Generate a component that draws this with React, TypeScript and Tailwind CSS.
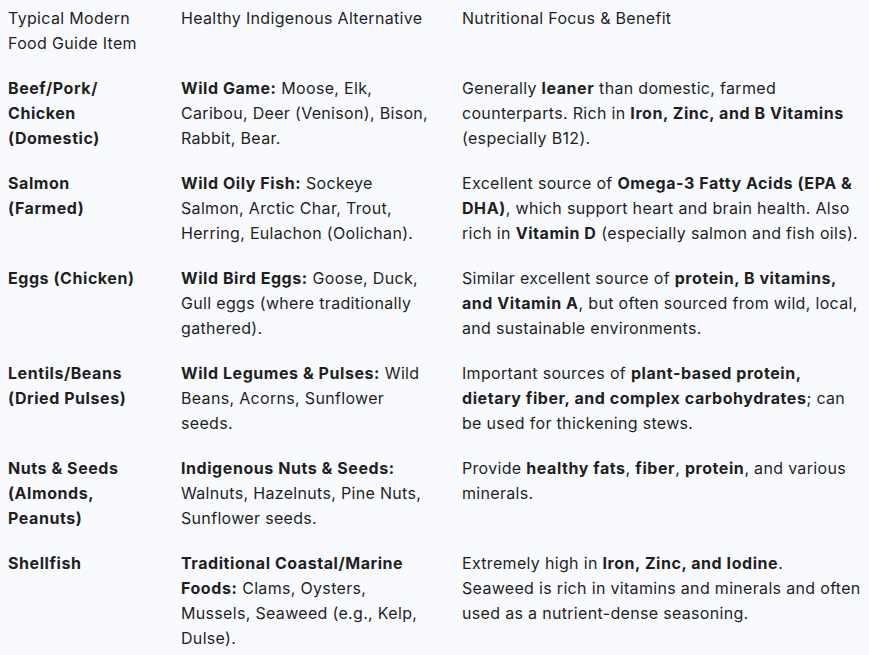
type Row = { item: React.ReactNode; alt: React.ReactNode; focus: React.ReactNode }

// line breaks follow the source layout so the columns wrap the same way
const rows: Row[] = [
  {
    item: (
      <>
        Beef/Pork/
        <br />
        Chicken
        <br />
        (Domestic)
      </>
    ),
    alt: (
      <>
        <b>Wild Game:</b> Moose, Elk,
        <br />
        Caribou, Deer (Venison), Bison,
        <br />
        Rabbit, Bear.
      </>
    ),
    focus: (
      <>
        Generally <b>leaner</b> than domestic, farmed
        <br />
        counterparts. Rich in <b>Iron, Zinc, and B Vitamins</b>
        <br />
        (especially B12).
      </>
    ),
  },
  {
    item: (
      <>
        Salmon
        <br />
        (Farmed)
      </>
    ),
    alt: (
      <>
        <b>Wild Oily Fish:</b> Sockeye
        <br />
        Salmon, Arctic Char, Trout,
        <br />
        Herring, Eulachon (Oolichan).
      </>
    ),
    focus: (
      <>
        Excellent source of{" "}
        <b>
          Omega-3 Fatty Acids (EPA &amp;
          <br />
          DHA)
        </b>
        , which support heart and brain health. Also
        <br />
        rich in <b>Vitamin D</b> (especially salmon and fish oils).
      </>
    ),
  },
  {
    item: "Eggs (Chicken)",
    alt: (
      <>
        <b>Wild Bird Eggs:</b> Goose, Duck,
        <br />
        Gull eggs (where traditionally
        <br />
        gathered).
      </>
    ),
    focus: (
      <>
        Similar excellent source of{" "}
        <b>
          protein, B vitamins,
          <br />
          and Vitamin A
        </b>
        , but often sourced from wild, local,
        <br />
        and sustainable environments.
      </>
    ),
  },
  {
    item: (
      <>
        Lentils/Beans
        <br />
        (Dried Pulses)
      </>
    ),
    alt: (
      <>
        <b>Wild Legumes &amp; Pulses:</b> Wild
        <br />
        Beans, Acorns, Sunflower
        <br />
        seeds.
      </>
    ),
    focus: (
      <>
        Important sources of{" "}
        <b>
          plant-based protein,
          <br />
          dietary fiber, and complex carbohydrates
        </b>
        ; can
        <br />
        be used for thickening stews.
      </>
    ),
  },
  {
    item: (
      <>
        Nuts &amp; Seeds
        <br />
        (Almonds,
        <br />
        Peanuts)
      </>
    ),
    alt: (
      <>
        <b>Indigenous Nuts &amp; Seeds:</b>
        <br />
        Walnuts, Hazelnuts, Pine Nuts,
        <br />
        Sunflower seeds.
      </>
    ),
    focus: (
      <>
        Provide <b>healthy fats</b>, <b>fiber</b>, <b>protein</b>, and various
        <br />
        minerals.
      </>
    ),
  },
  {
    item: "Shellfish",
    alt: (
      <>
        <b>
          Traditional Coastal/Marine
          <br />
          Foods:
        </b>{" "}
        Clams, Oysters,
        <br />
        Mussels, Seaweed (e.g., Kelp,
        <br />
        Dulse).
      </>
    ),
    focus: (
      <>
        Extremely high in <b>Iron, Zinc, and Iodine</b>.
        <br />
        Seaweed is rich in vitamins and minerals and often
        <br />
        used as a nutrient-dense seasoning.
      </>
    ),
  },
]

export default function App() {
  return (
    <div className="min-h-screen bg-[#f8fafd] font-['Inter',sans-serif] text-[16px] leading-[25px] tracking-[0.02em] text-[#1f1f1f]">
      <div className="grid grid-cols-[181px_281px_1fr] gap-y-5 pt-[6px]">
        <div className="pl-2">
          Typical Modern
          <br />
          Food Guide Item
        </div>
        <div>Healthy Indigenous Alternative</div>
        <div>Nutritional Focus &amp; Benefit</div>
        {rows.map((r, i) => (
          <div key={i} className="contents">
            <div className="pl-2 font-bold tracking-[0.035em]">{r.item}</div>
            <div className="[&_b]:font-bold [&_b]:tracking-[0.035em]">{r.alt}</div>
            <div className="whitespace-nowrap [&_b]:font-bold [&_b]:tracking-[0.035em]">{r.focus}</div>
          </div>
        ))}
      </div>
    </div>
  )
}
